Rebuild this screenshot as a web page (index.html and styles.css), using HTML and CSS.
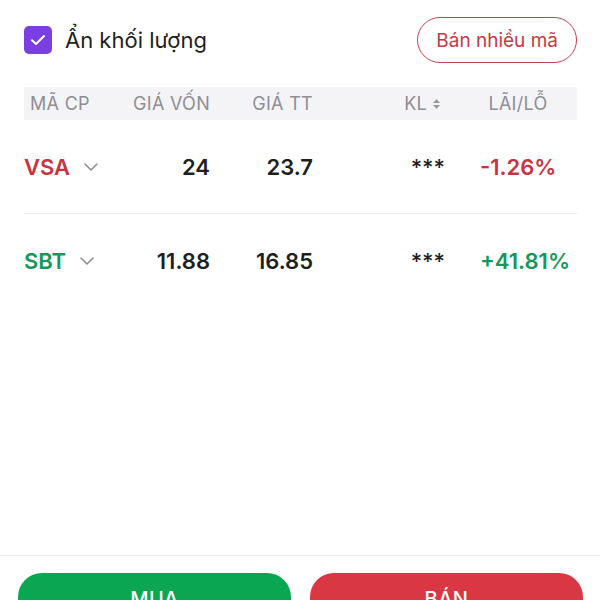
FILE: index.html
```html
<!DOCTYPE html>
<html lang="vi">
<head>
    <meta charset="UTF-8">
    <meta name="viewport" content="width=device-width, initial-scale=1.0">
    <title>Danh mục</title>
    <link rel="stylesheet" href="styles.css">
</head>
<body>
    <div class="main">
        <div class="top">
            <label class="check">
                <span class="check-box">
                    <svg width="16" height="12" viewBox="0 0 16 12"><path d="M2 6.2l4 3.8 8-8" fill="none" stroke="#fff" stroke-width="2" stroke-linecap="round" stroke-linejoin="round"/></svg>
                </span>
                Ẩn khối lượng
            </label>
            <button class="button-outline">Bán nhiều mã</button>
        </div>

        <div class="table">
            <div class="row head">
                <div class="c-code">MÃ CP</div>
                <div class="c-num">GIÁ VỐN</div>
                <div class="c-num">GIÁ TT</div>
                <div class="c-kl">KL
                    <svg width="9" height="12" viewBox="0 0 9 12"><path d="M4.5 1L8 5H1z M4.5 11L8 7H1z" fill="#9a9aa0"/></svg>
                </div>
                <div class="c-pct">LÃI/LỖ</div>
            </div>
            <div class="row item">
                <div class="c-code down">VSA
                    <svg class="chev" width="14" height="8" viewBox="0 0 14 8"><path d="M1 1l6 6 6-6" fill="none" stroke="#8a8a8e" stroke-width="1.5" stroke-linecap="round" stroke-linejoin="round"/></svg>
                </div>
                <div class="c-num">24</div>
                <div class="c-num">23.7</div>
                <div class="c-kl">***</div>
                <div class="c-pct down">-1.26%</div>
            </div>
            <div class="row item">
                <div class="c-code up">SBT
                    <svg class="chev" width="14" height="8" viewBox="0 0 14 8"><path d="M1 1l6 6 6-6" fill="none" stroke="#8a8a8e" stroke-width="1.5" stroke-linecap="round" stroke-linejoin="round"/></svg>
                </div>
                <div class="c-num">11.88</div>
                <div class="c-num">16.85</div>
                <div class="c-kl">***</div>
                <div class="c-pct up">+41.81%</div>
            </div>
        </div>
    </div>

    <div class="footer">
        <button class="button button-buy">MUA</button>
        <button class="button button-sell">BÁN</button>
    </div>
</body>
</html>
```

FILE: styles.css
```css
body {
    margin: 0;
    background-color: white;
    color: #1f1f22;
    font-family: 'Inter', 'Roboto', sans-serif;
}

.main {
    height: 555px;
    box-sizing: border-box;
    padding: 17px 23px 0 24px;
}

.top {
    display: flex;
    justify-content: space-between;
    align-items: center;
    height: 46px;
}

.check {
    display: flex;
    align-items: center;
    gap: 13px;
    font-size: 22px;
    color: #1f1f22;
}

.check-box {
    width: 28px;
    height: 28px;
    border-radius: 5px;
    background-color: #7a3ee3;
    display: flex;
    align-items: center;
    justify-content: center;
}

.button-outline {
    height: 46px;
    padding: 0 18px;
    border: 1.5px solid #c8414d;
    border-radius: 23px;
    background: white;
    color: #c23a44;
    font-family: inherit;
    font-size: 19px;
}

.table {
    margin-top: 24px;
}

.row {
    display: grid;
    grid-template-columns: 86px 100px 103px 1fr 76px;
    align-items: center;
    padding-right: 21px;
}

.head {
    height: 33px;
    background-color: #f4f4f7;
    color: #8e8e93;
    font-size: 18px;
    letter-spacing: 0.3px;
}

.head .c-code {
    padding-left: 6px;
}

.item {
    height: 94px;
    font-size: 22px;
    font-weight: 600;
}

.item + .item {
    border-top: 1px solid #ededf0;
}

.item:last-child {
    margin-top: -1px;
}

.c-code {
    display: flex;
    align-items: center;
}

.chev {
    margin-left: 14px;
}

.c-num {
    text-align: right;
}

.c-kl {
    display: flex;
    align-items: center;
    justify-content: flex-end;
    gap: 5px;
    padding-right: 39px;
}

.item .c-kl {
    font-weight: 500;
    padding-right: 35px;
}

.c-pct {
    text-align: center;
}

.down {
    color: #c8333f;
}

.up {
    color: #17985a;
}

.footer {
    border-top: 1px solid #ececee;
    display: flex;
    gap: 19px;
    padding: 17px 17px 0 18px;
}

.button {
    flex: 1;
    height: 52px;
    border: none;
    border-radius: 24px;
    color: white;
    font-family: inherit;
    font-size: 20px;
    font-weight: 500;
    letter-spacing: 0.5px;
}

.button-buy {
    background-color: #0ba651;
}

.button-sell {
    background-color: #d93744;
}
```
